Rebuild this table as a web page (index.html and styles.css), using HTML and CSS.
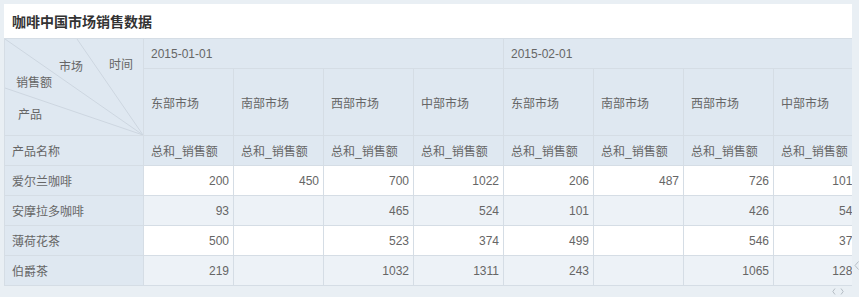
FILE: index.html
```html
<!DOCTYPE html>
<html lang="zh">
<head>
<meta charset="utf-8">
<title>咖啡中国市场销售数据</title>
<link rel="stylesheet" href="styles.css">
</head>
<body>
<div class="panel">
  <div class="title">咖啡中国市场销售数据</div>
  <div class="clip">
    <div class="grid">
      <div class="cell hd corner">
        <svg class="diag" width="138" height="96" viewBox="0 0 138 96">
          <line x1="0" y1="0" x2="138" y2="96"/>
          <line x1="72" y1="0" x2="138" y2="96"/>
          <line x1="0" y1="49" x2="138" y2="96"/>
        </svg>
        <span class="lbl l-time">时间</span>
        <span class="lbl l-market">市场</span>
        <span class="lbl l-sales">销售额</span>
        <span class="lbl l-prod">产品</span>
      </div>
      <div class="cell hd date">2015-01-01</div>
      <div class="cell hd date">2015-02-01</div>

      <div class="cell hd">东部市场</div>
      <div class="cell hd">南部市场</div>
      <div class="cell hd">西部市场</div>
      <div class="cell hd">中部市场</div>
      <div class="cell hd">东部市场</div>
      <div class="cell hd">南部市场</div>
      <div class="cell hd">西部市场</div>
      <div class="cell hd">中部市场</div>

      <div class="cell hd">产品名称</div>
      <div class="cell hd">总和_销售额</div>
      <div class="cell hd">总和_销售额</div>
      <div class="cell hd">总和_销售额</div>
      <div class="cell hd">总和_销售额</div>
      <div class="cell hd">总和_销售额</div>
      <div class="cell hd">总和_销售额</div>
      <div class="cell hd">总和_销售额</div>
      <div class="cell hd">总和_销售额</div>

      <div class="cell hd">爱尔兰咖啡</div>
      <div class="cell num">200</div>
      <div class="cell num">450</div>
      <div class="cell num">700</div>
      <div class="cell num">1022</div>
      <div class="cell num">206</div>
      <div class="cell num">487</div>
      <div class="cell num">726</div>
      <div class="cell num">1018</div>

      <div class="cell hd">安摩拉多咖啡</div>
      <div class="cell num alt">93</div>
      <div class="cell num alt"></div>
      <div class="cell num alt">465</div>
      <div class="cell num alt">524</div>
      <div class="cell num alt">101</div>
      <div class="cell num alt"></div>
      <div class="cell num alt">426</div>
      <div class="cell num alt">548</div>

      <div class="cell hd">薄荷花茶</div>
      <div class="cell num">500</div>
      <div class="cell num"></div>
      <div class="cell num">523</div>
      <div class="cell num">374</div>
      <div class="cell num">499</div>
      <div class="cell num"></div>
      <div class="cell num">546</div>
      <div class="cell num">372</div>

      <div class="cell hd">伯爵茶</div>
      <div class="cell num alt">219</div>
      <div class="cell num alt"></div>
      <div class="cell num alt">1032</div>
      <div class="cell num alt">1311</div>
      <div class="cell num alt">243</div>
      <div class="cell num alt"></div>
      <div class="cell num alt">1065</div>
      <div class="cell num alt">1289</div>
    </div>
  </div>
  <div class="hscroll">
    <svg width="12" height="7" viewBox="0 0 12 7"><path d="M3 0.5 L0.8 3.5 L3 6.5 M9 0.5 L11.2 3.5 L9 6.5"/></svg>
  </div>
</div>
<svg class="vscroll" width="5" height="9" viewBox="0 0 5 9"><path d="M4.5 0.5 L1 4.5 L4.5 8.5"/></svg>
</body>
</html>
```
FILE: styles.css
```css
html, body {
  margin: 0;
  padding: 0;
}
body {
  background: #e9eff4;
  width: 859px;
  height: 297px;
  overflow: hidden;
  position: relative;
  font-family: "Liberation Sans", "Noto Sans CJK SC", sans-serif;
}
.panel {
  margin: 4px 0 0 4px;
  width: 848px;
}
.title {
  background: #ffffff;
  height: 34px;
  line-height: 34px;
  padding-left: 8px;
  font-size: 14px;
  font-weight: bold;
  color: #333333;
  font-family: "Noto Sans CJK SC", sans-serif;
}
.clip {
  width: 848px;
  overflow: hidden;
}
.grid {
  display: grid;
  grid-template-columns: 138px repeat(8, 89px);
  grid-template-rows: 29px 66px repeat(5, 29px);
  gap: 1px;
  padding: 1px;
  background: #d5dde5;
  width: max-content;
}
.cell {
  display: flex;
  align-items: center;
  font-size: 12px;
  color: #666666;
  padding: 0 7px;
  white-space: nowrap;
  overflow: hidden;
}
.hd {
  background: #dfe8f1;
}
.corner {
  grid-row: 1 / span 2;
  position: relative;
  padding: 0;
}
.date {
  grid-column: span 4;
}
.num {
  background: #ffffff;
  justify-content: flex-end;
  padding: 0 4px 0 0;
}
.num.alt {
  background: #edf2f7;
}
.diag {
  position: absolute;
  left: 0;
  top: 0;
}
.diag line {
  stroke: #cdd6e0;
  stroke-width: 1;
}
.lbl {
  position: absolute;
  font-size: 12px;
  color: #666666;
  line-height: 14px;
}
.l-time { left: 104px; top: 19px; }
.l-market { left: 54px; top: 21px; }
.l-sales { left: 11px; top: 37px; }
.l-prod { left: 13px; top: 69px; }
.hscroll {
  display: flex;
  justify-content: flex-end;
  padding: 2px 8px 0 0;
}
.hscroll svg path,
.vscroll path {
  fill: none;
  stroke: #b5bcc4;
  stroke-width: 1;
}
.vscroll {
  position: absolute;
  left: 854px;
  top: 261px;
}
```
